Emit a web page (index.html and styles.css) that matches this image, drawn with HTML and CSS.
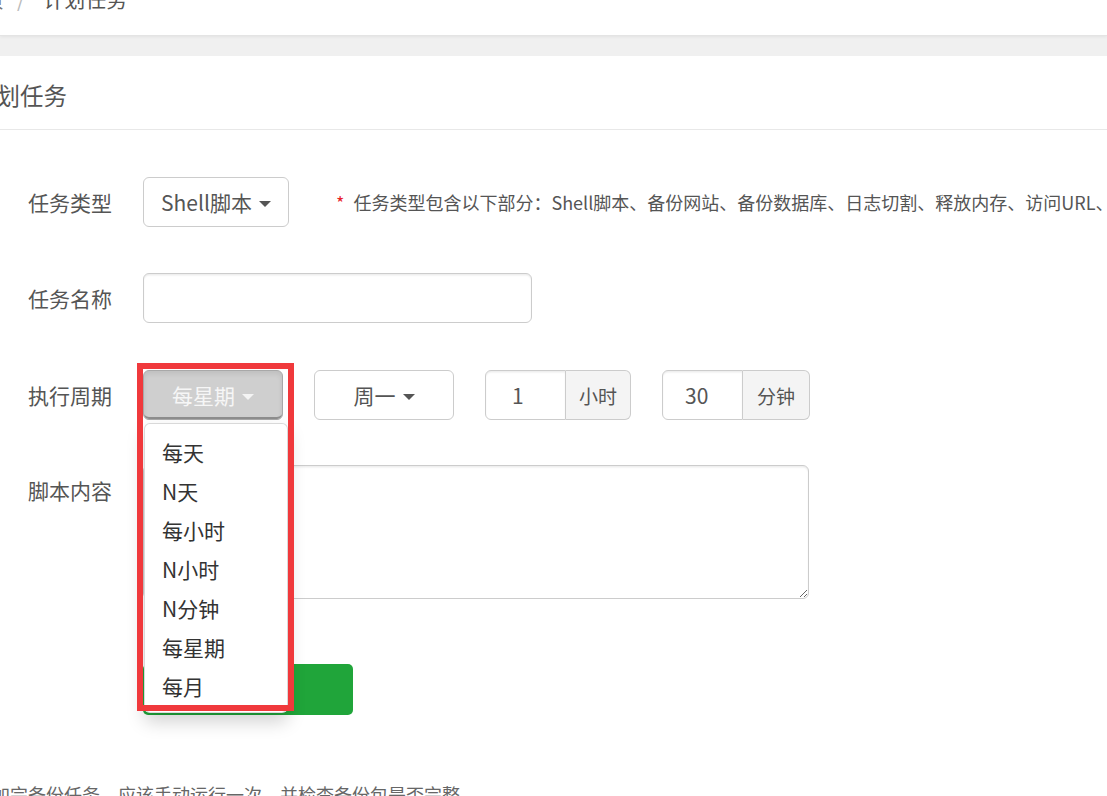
FILE: index.html
```html
<!DOCTYPE html>
<html lang="zh-CN">
<head>
<meta charset="utf-8">
<title>计划任务</title>
<link rel="stylesheet" href="styles.css">
</head>
<body>
<header class="topbar">
  <nav class="crumbs"><span class="crumb-home">首页</span><span class="crumb-sep">/</span><span class="crumb-cur">计划任务</span></nav>
</header>
<main class="card">
  <h1 class="card-title">计划任务</h1>
  <form class="form">
    <div class="row">
      <label class="label">任务类型</label>
      <button type="button" class="btn btn-type">Shell脚本<span class="caret"></span></button>
      <span class="note"><span class="star">*</span>任务类型包含以下部分：Shell脚本、备份网站、备份数据库、日志切割、释放内存、访问URL、</span>
    </div>
    <div class="row">
      <label class="label">任务名称</label>
      <input class="input input-name" type="text">
    </div>
    <div class="row">
      <label class="label">执行周期</label>
      <div class="dd">
        <button type="button" class="btn btn-active btn-cycle">每星期<span class="caret caret-light"></span></button>
        <ul class="menu">
          <li>每天</li>
          <li>N天</li>
          <li>每小时</li>
          <li>N小时</li>
          <li>N分钟</li>
          <li>每星期</li>
          <li>每月</li>
        </ul>
        <div class="mark"></div>
      </div>
      <button type="button" class="btn btn-week">周一<span class="caret"></span></button>
      <div class="group">
        <input class="input group-input" type="text" value="1">
        <span class="addon">小时</span>
      </div>
      <div class="group">
        <input class="input group-input group-input2" type="text" value="30">
        <span class="addon addon2">分钟</span>
      </div>
    </div>
    <div class="row row-top">
      <label class="label label-tall">脚本内容</label>
      <textarea class="textarea"></textarea>
    </div>
    <div class="row row-submit">
      <button type="button" class="btn-submit">添加任务</button>
    </div>
    <p class="tip">如果添加完备份任务，应该手动运行一次，并检查备份包是否完整</p>
  </form>
</main>
</body>
</html>
```

FILE: styles.css
```css
* { box-sizing: border-box; }

html, body {
  margin: 0;
  padding: 0;
  width: 1107px;
  height: 796px;
  overflow: hidden;
  background: #f0f0f0;
  font-family: "Noto Sans CJK SC", "Noto Sans", sans-serif;
  color: #555;
}

.topbar {
  height: 36px;
  background: #fff;
  border-bottom: 1px solid #e4e4e4;
  box-shadow: 0 1px 3px rgba(0, 0, 0, 0.06);
  overflow: hidden;
}

.crumbs {
  display: flex;
  align-items: center;
  margin: -17px 0 0 -38px;
  height: 30px;
  font-size: 21px;
  line-height: 30px;
}

.crumb-home { color: #777; }
.crumb-sep { color: #bbb; margin: 0 18px 0 13px; }
.crumb-cur { color: #555; }

.card {
  margin-top: 20px;
  background: #fff;
  height: 740px;
}

.card-title {
  margin: 0;
  height: 74px;
  line-height: 78px;
  font-size: 23.5px;
  font-weight: normal;
  color: #555;
  text-indent: -27px;
  border-bottom: 1px solid #e8e8e8;
}

.form {
  padding-top: 47px;
}

.row {
  display: flex;
  align-items: center;
  height: 50px;
  margin-bottom: 46px;
  white-space: nowrap;
}

.row > * { flex: none; }

.row:nth-child(2) { margin-bottom: 47px; }
.row:nth-child(3) { margin-bottom: 45px; }

.row-top {
  align-items: flex-start;
  height: 134px;
  margin-bottom: 65px;
}

.label {
  width: 143px;
  padding-left: 28px;
  font-size: 21px;
  line-height: 50px;
  color: #555;
}

.btn {
  display: flex;
  align-items: center;
  justify-content: center;
  height: 50px;
  padding: 0;
  background: #fff;
  border: 1px solid #ccc;
  border-radius: 6px;
  font-family: inherit;
  font-size: 21px;
  color: #555;
}

.btn-type { width: 146px; }
.btn-week { width: 140px; margin-left: 31px; }

.caret {
  display: inline-block;
  margin-left: 7px;
  margin-top: 3px;
  border-top: 6px solid #555;
  border-left: 6px solid transparent;
  border-right: 6px solid transparent;
}

.caret-light { border-top-color: #f4f4f4; }

.note {
  margin-left: 47px;
  font-size: 18px;
  color: #555;
}

.star {
  color: #e8232a;
  margin-right: 9px;
}

.input {
  height: 50px;
  border: 1px solid #ccc;
  border-radius: 6px;
  box-shadow: inset 0 1.5px 1.5px rgba(0, 0, 0, 0.075);
  font-family: inherit;
  font-size: 21px;
  color: #555;
  outline: none;
  background: #fff;
}

.input-name { width: 389px; }

.dd {
  position: relative;
}

.btn-cycle {
  width: 140px;
  background: #cfcfcf;
  border-color: #a8a8a8;
  color: #f6f6f6;
  box-shadow: inset 0 -3px 0 -1px #8e8e8e, inset 0 3px 5px rgba(0, 0, 0, 0.08);
}

.menu {
  position: absolute;
  top: 53px;
  left: 1px;
  width: 144px;
  margin: 0;
  padding: 9px 0 6px;
  list-style: none;
  background: #fff;
  border: 1px solid rgba(0, 0, 0, 0.15);
  border-radius: 6px;
  box-shadow: 0 9px 18px rgba(0, 0, 0, 0.175);
  z-index: 5;
}

.menu li {
  padding: 0 17px;
  height: 39px;
  line-height: 39px;
  font-size: 21px;
  color: #333;
}

.mark {
  position: absolute;
  left: -6px;
  top: -7px;
  width: 157px;
  height: 348px;
  border: 6px solid #f0393c;
  z-index: 6;
  pointer-events: none;
}

.group {
  display: flex;
  margin-left: 31px;
  height: 50px;
}

.group-input {
  width: 81px;
  padding: 0 0 0 26px;
  border-radius: 6px 0 0 6px;
}

.group-input2 { padding-left: 22px; }

.addon {
  display: flex;
  align-items: center;
  justify-content: center;
  width: 65px;
  height: 50px;
  border: 1px solid #ccc;
  border-left: 0;
  border-radius: 0 6px 6px 0;
  background: #f4f4f4;
  font-size: 19px;
  color: #555;
}

.addon2 { width: 67px; }

.textarea {
  width: 666px;
  height: 134px;
  border: 1px solid #ccc;
  border-radius: 6px;
  box-shadow: inset 0 1.5px 1.5px rgba(0, 0, 0, 0.075);
  resize: both;
  font-family: inherit;
  font-size: 21px;
}

.row-submit {
  height: 51px;
  margin-bottom: 0;
  padding-left: 143px;
}

.btn-submit {
  width: 210px;
  height: 51px;
  border: 0;
  border-radius: 5px;
  background: #20a53a;
  color: #fff;
  font-family: inherit;
  font-size: 21px;
}

.tip {
  margin: 66px 0 0;
  font-size: 18px;
  line-height: 26px;
  color: #666;
  text-indent: -62px;
  white-space: nowrap;
}
```
